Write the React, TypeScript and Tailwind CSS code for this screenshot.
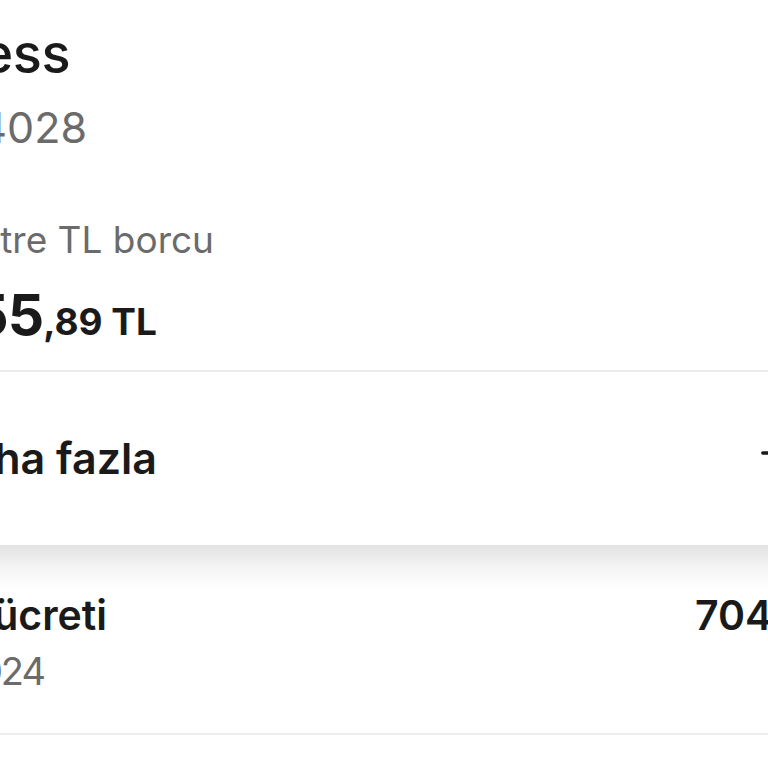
import { Plus } from "lucide-react";

const font = { fontFamily: "Inter, 'Noto Sans', sans-serif" };

// a line of text whose right edge sits at a fixed x; anything past the left edge is cut off
const EndAt = ({
  className,
  children,
}: {
  className: string;
  children: React.ReactNode;
}) => (
  <div className={`flex shrink-0 justify-end whitespace-nowrap ${className}`}>
    {children}
  </div>
);

const App = () => {
  return (
    <div
      className="w-[768px] h-[768px] overflow-hidden bg-white text-[#1a1a1a]"
      style={font}
    >
      {/* card summary */}
      <div className="flex flex-col pt-[27px]">
        <EndAt className="w-[70px] text-[54px] leading-[54px] font-medium tracking-[-0.5px]">
          Axess
        </EndAt>
        <EndAt className="mt-[25px] w-[87px] text-[43px] leading-[43px] text-[#6b6b6b]">
          **** 4028
        </EndAt>
        <EndAt className="mt-[72px] w-[214px] text-[37px] leading-[37px] text-[#6b6b6b]">
          Ekstre TL borcu
        </EndAt>
        <EndAt className="mt-[28px] w-[157px] items-baseline">
          <span className="text-[57px] leading-none font-bold tracking-[-1px]">1.255</span>
          <span className="text-[37px] leading-none font-bold">,89 TL</span>
        </EndAt>
        <div className="mt-[27px] h-[2px] bg-[#ececec]" />
      </div>

      {/* more */}
      <div className="h-[173px] flex justify-between pt-[65px]">
        <EndAt className="w-[157px] text-[43px] leading-[43px] font-semibold">
          Daha fazla
        </EndAt>
        <div className="mt-[2px] -mr-[17px] h-[40px] flex items-start">
          <Plus size={28} strokeWidth={3} className="text-[#1a1a1a]" />
        </div>
      </div>

      <div className="h-[45px] bg-gradient-to-b from-[#e2e2e2] via-[#f4f4f4] to-white" />

      {/* transaction */}
      <div className="flex flex-col pt-[5px]">
        <div className="flex items-baseline">
          <EndAt className="w-[107px] text-[41px] leading-[41px] font-semibold">
            Yıllık kart ücreti
          </EndAt>
          <div className="ml-[588px] whitespace-nowrap text-[41px] leading-[41px] font-semibold">
            704,00 TL
          </div>
        </div>
        <EndAt className="mt-[16px] w-[44px] text-[38px] leading-[39px] tracking-[-2px] text-[#6b6b6b]">
          12.05.2024
        </EndAt>
        <div className="mt-[42px] h-[2px] bg-[#ececec]" />
      </div>
    </div>
  );
};

export default App;
